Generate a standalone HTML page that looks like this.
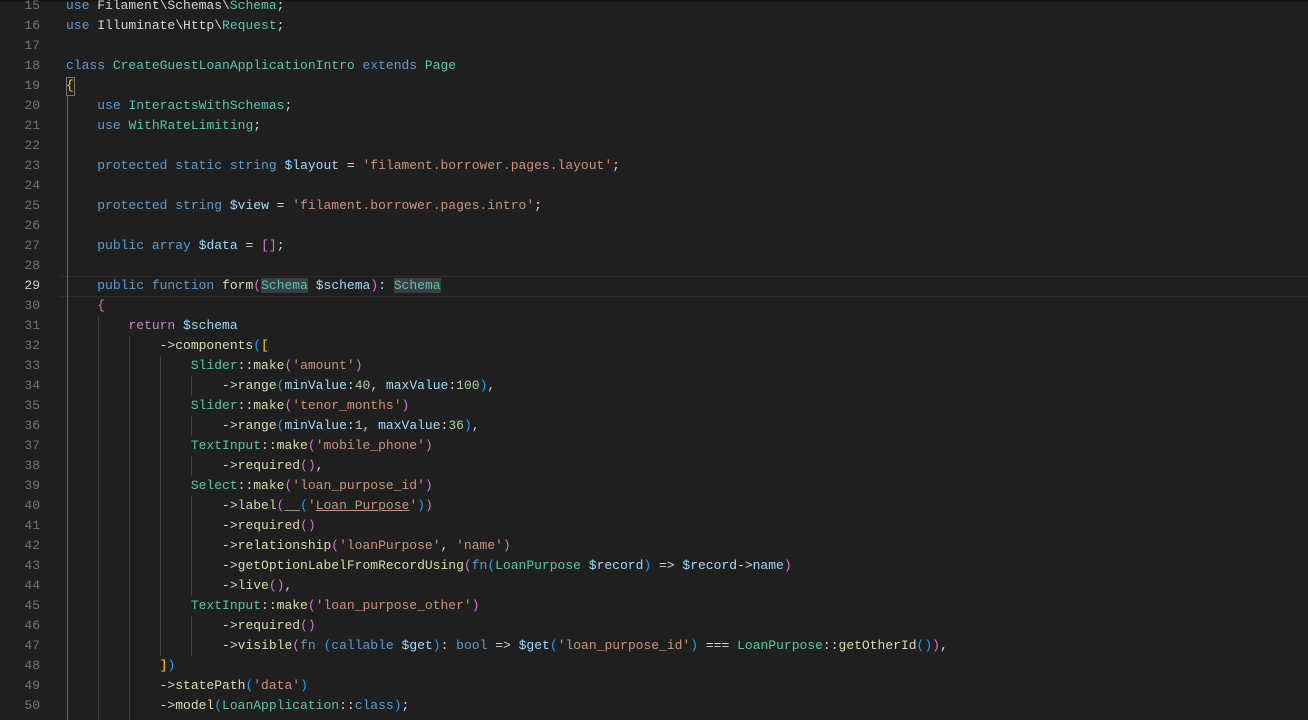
<!DOCTYPE html>
<html><head><meta charset="utf-8"><style>
html,body{margin:0;padding:0;width:1308px;height:720px;overflow:hidden;background:#1f1f1f}
body{position:relative;font-family:"Liberation Mono",monospace;font-size:13px}
.ln{position:absolute;left:0;width:40px;text-align:right;color:#6e7681;height:20px;line-height:20px}
.l{position:absolute;left:66px;height:20px;line-height:20px;white-space:pre;color:#d4d4d4}
.g{position:absolute;width:1px;background:#404040}
.k{color:#569cd6}.c{color:#4ec9b0}.s{color:#ce9178}.v{color:#9cdcfe}.f{color:#dcdcaa}.p{color:#c586c0}.n{color:#b5cea8}
.b1{color:#ffd700}.b2{color:#da70d6}.b3{color:#179fff}
.hl{background:#3a3d41}
</style></head><body>
<div style="position:absolute;left:0;top:0;width:1308px;height:3px;background:linear-gradient(#111,#1f1f1f)"></div>
<div style="position:absolute;left:60px;top:276px;width:1248px;height:19px;border-top:1px solid #2b2b2b;border-bottom:1px solid #2b2b2b"></div>
<div class="g" style="left:67px;top:96px;height:624px;background:#6a6a6a"></div>
<div style="position:absolute;left:66px;top:77px;width:7px;height:17px;border:1px solid #777"></div>
<div class="g" style="left:98px;top:316px;height:404px"></div>
<div class="g" style="left:129px;top:336px;height:384px"></div>
<div class="g" style="left:160px;top:356px;height:300px"></div>
<div class="g" style="left:191px;top:376px;height:20px"></div>
<div class="g" style="left:191px;top:416px;height:20px"></div>
<div class="g" style="left:191px;top:456px;height:20px"></div>
<div class="g" style="left:191px;top:496px;height:100px"></div>
<div class="g" style="left:191px;top:616px;height:40px"></div>

<div class="ln" style="top:-4px">15</div><div class="l" style="top:-4px"><span class="k">use</span> Filament\Schemas\<span class="c">Schema</span>;</div>
<div class="ln" style="top:16px">16</div><div class="l" style="top:16px"><span class="k">use</span> Illuminate\Http\<span class="c">Request</span>;</div>
<div class="ln" style="top:36px">17</div>
<div class="ln" style="top:56px">18</div><div class="l" style="top:56px"><span class="k">class</span> <span class="c">CreateGuestLoanApplicationIntro</span> <span class="k">extends</span> <span class="c">Page</span></div>
<div class="ln" style="top:76px">19</div><div class="l" style="top:76px"><span class="b1">{</span></div>
<div class="ln" style="top:96px">20</div><div class="l" style="top:96px">    <span class="k">use</span> <span class="c">InteractsWithSchemas</span>;</div>
<div class="ln" style="top:116px">21</div><div class="l" style="top:116px">    <span class="k">use</span> <span class="c">WithRateLimiting</span>;</div>
<div class="ln" style="top:136px">22</div>
<div class="ln" style="top:156px">23</div><div class="l" style="top:156px">    <span class="k">protected static string</span> <span class="v">$layout</span> = <span class="s">'filament.borrower.pages.layout'</span>;</div>
<div class="ln" style="top:176px">24</div>
<div class="ln" style="top:196px">25</div><div class="l" style="top:196px">    <span class="k">protected string</span> <span class="v">$view</span> = <span class="s">'filament.borrower.pages.intro'</span>;</div>
<div class="ln" style="top:216px">26</div>
<div class="ln" style="top:236px">27</div><div class="l" style="top:236px">    <span class="k">public array</span> <span class="v">$data</span> = <span class="b2">[]</span>;</div>
<div class="ln" style="top:256px">28</div>
<div class="ln" style="top:276px;color:#cccccc">29</div><div class="l" style="top:276px">    <span class="k">public function</span> <span class="f">form</span><span class="b2">(</span><span class="c hl">Schema</span> <span class="v">$schema</span><span class="b2">)</span>: <span class="c hl">Schema</span></div>
<div class="ln" style="top:296px">30</div><div class="l" style="top:296px">    <span class="b2">{</span></div>
<div class="ln" style="top:316px">31</div><div class="l" style="top:316px">        <span class="p">return</span> <span class="v">$schema</span></div>
<div class="ln" style="top:336px">32</div><div class="l" style="top:336px">            -&gt;<span class="f">components</span><span class="b3">(</span><span class="b1">[</span></div>
<div class="ln" style="top:356px">33</div><div class="l" style="top:356px">                <span class="c">Slider</span>::<span class="f">make</span><span class="b2">(</span><span class="s">'amount'</span><span class="b2">)</span></div>
<div class="ln" style="top:376px">34</div><div class="l" style="top:376px">                    -&gt;<span class="f">range</span><span class="b3">(</span><span class="v">minValue</span>:<span class="n">40</span>, <span class="v">maxValue</span>:<span class="n">100</span><span class="b3">)</span>,</div>
<div class="ln" style="top:396px">35</div><div class="l" style="top:396px">                <span class="c">Slider</span>::<span class="f">make</span><span class="b2">(</span><span class="s">'tenor_months'</span><span class="b2">)</span></div>
<div class="ln" style="top:416px">36</div><div class="l" style="top:416px">                    -&gt;<span class="f">range</span><span class="b3">(</span><span class="v">minValue</span>:<span class="n">1</span>, <span class="v">maxValue</span>:<span class="n">36</span><span class="b3">)</span>,</div>
<div class="ln" style="top:436px">37</div><div class="l" style="top:436px">                <span class="c">TextInput</span>::<span class="f">make</span><span class="b2">(</span><span class="s">'mobile_phone'</span><span class="b2">)</span></div>
<div class="ln" style="top:456px">38</div><div class="l" style="top:456px">                    -&gt;<span class="f">required</span><span class="b2">()</span>,</div>
<div class="ln" style="top:476px">39</div><div class="l" style="top:476px">                <span class="c">Select</span>::<span class="f">make</span><span class="b2">(</span><span class="s">'loan_purpose_id'</span><span class="b2">)</span></div>
<div class="ln" style="top:496px">40</div><div class="l" style="top:496px">                    -&gt;<span class="f">label</span><span class="b2">(</span><span class="f">__</span><span class="b3">(</span><span class="s">'<span style="text-decoration:underline">Loan Purpose</span>'</span><span class="b3">)</span><span class="b2">)</span></div>
<div class="ln" style="top:516px">41</div><div class="l" style="top:516px">                    -&gt;<span class="f">required</span><span class="b2">()</span></div>
<div class="ln" style="top:536px">42</div><div class="l" style="top:536px">                    -&gt;<span class="f">relationship</span><span class="b2">(</span><span class="s">'loanPurpose'</span>, <span class="s">'name'</span><span class="b2">)</span></div>
<div class="ln" style="top:556px">43</div><div class="l" style="top:556px">                    -&gt;<span class="f">getOptionLabelFromRecordUsing</span><span class="b2">(</span><span class="k">fn</span><span class="b3">(</span><span class="c">LoanPurpose</span> <span class="v">$record</span><span class="b3">)</span> =&gt; <span class="v">$record</span>-&gt;<span class="v">name</span><span class="b2">)</span></div>
<div class="ln" style="top:576px">44</div><div class="l" style="top:576px">                    -&gt;<span class="f">live</span><span class="b2">()</span>,</div>
<div class="ln" style="top:596px">45</div><div class="l" style="top:596px">                <span class="c">TextInput</span>::<span class="f">make</span><span class="b2">(</span><span class="s">'loan_purpose_other'</span><span class="b2">)</span></div>
<div class="ln" style="top:616px">46</div><div class="l" style="top:616px">                    -&gt;<span class="f">required</span><span class="b2">()</span></div>
<div class="ln" style="top:636px">47</div><div class="l" style="top:636px">                    -&gt;<span class="f">visible</span><span class="b2">(</span><span class="k">fn</span> <span class="b3">(</span><span class="k">callable</span> <span class="v">$get</span><span class="b3">)</span>: <span class="k">bool</span> =&gt; <span class="v">$get</span><span class="b3">(</span><span class="s">'loan_purpose_id'</span><span class="b3">)</span> === <span class="c">LoanPurpose</span>::<span class="f">getOtherId</span><span class="b3">()</span><span class="b2">)</span>,</div>
<div class="ln" style="top:656px">48</div><div class="l" style="top:656px">            <span class="b1">]</span><span class="b3">)</span></div>
<div class="ln" style="top:676px">49</div><div class="l" style="top:676px">            -&gt;<span class="f">statePath</span><span class="b3">(</span><span class="s">'data'</span><span class="b3">)</span></div>
<div class="ln" style="top:696px">50</div><div class="l" style="top:696px">            -&gt;<span class="f">model</span><span class="b3">(</span><span class="c">LoanApplication</span>::<span class="k">class</span><span class="b3">)</span>;</div>
</body></html>
